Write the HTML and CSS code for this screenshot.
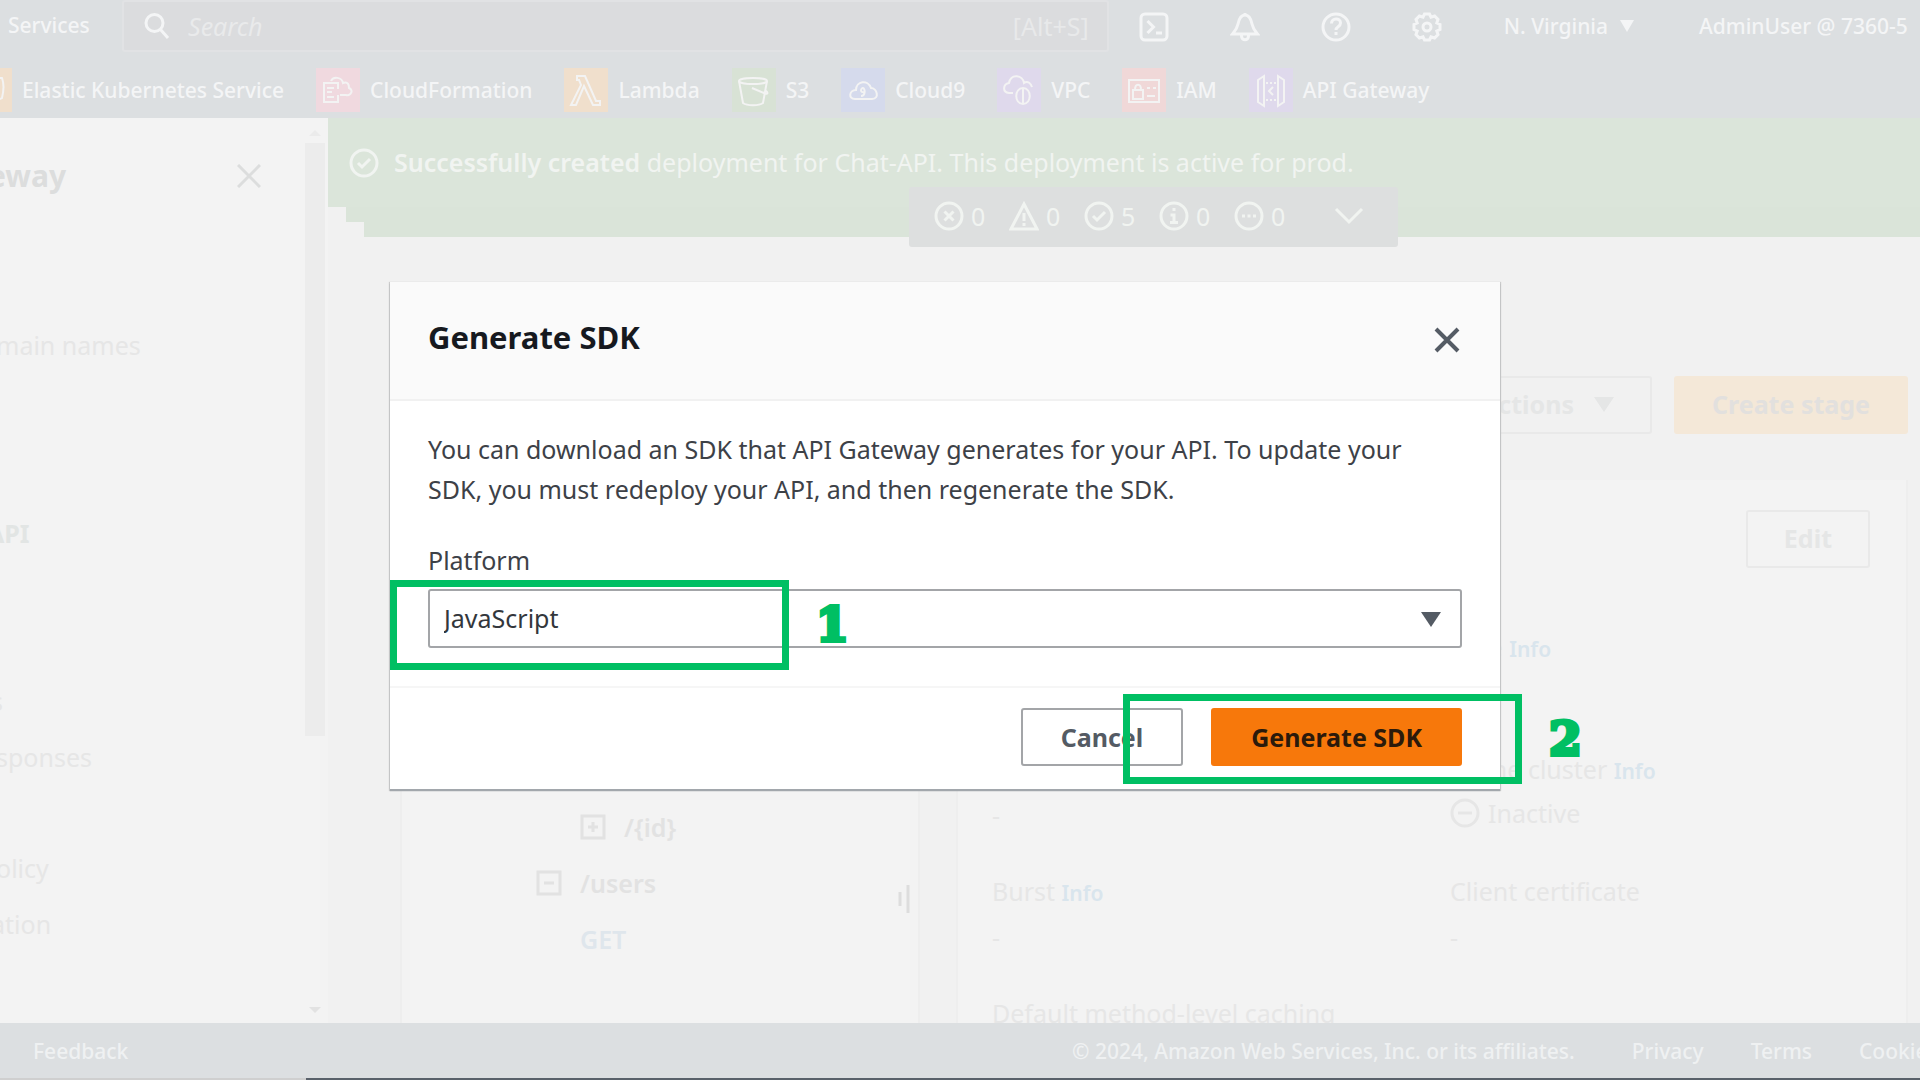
FILE: index.html
```html
<!DOCTYPE html>
<html lang="en">
<head>
<meta charset="utf-8">
<meta name="viewport" content="width=device-width, initial-scale=1">
<title>API Gateway - Stages</title>
<link rel="stylesheet" href="styles.css">
</head>
<body>
<div class="page">
  <header class="topbar">
    <div class="topbar-main">
      <a class="services" href="#">Services</a>
      <label class="search">
        <svg class="icon-search" viewBox="0 0 26 26" aria-hidden="true"><circle cx="10.500" cy="10" r="8.500"/><path d="M16.500 16.500 24 25"/></svg>
        <input type="search" placeholder="Search" aria-label="Search">
        <span class="shortcut">[Alt+S]</span>
      </label>
      <div class="tools">
        <button type="button" aria-label="CloudShell"><svg viewBox="0 0 30 30"><rect x="2" y="2" width="26" height="26" rx="4"/><path d="m8.500 9 6 6-6 6M17 21h6"/></svg></button>
        <button type="button" aria-label="Notifications"><svg viewBox="0 0 30 30"><path d="M15 3c-4 0-6 4-7 9C7 17 5 19 2.500 22h25c-2.500-3-4.500-5-5.500-10-1-5-3-9-7-9zM11.500 22v2c0 5 7 5 7 0v-2M15 3V1"/></svg></button>
        <button type="button" aria-label="Help"><svg viewBox="0 0 30 30"><circle cx="15" cy="15" r="13"/><path d="M10.500 11.500c0-6 9-6 9-.5 0 4-4.500 3.500-4.500 7M15 20v3"/></svg></button>
        <button type="button" aria-label="Settings"><svg viewBox="0 0 30 30"><path d="m12.500 2 5 0 1.500 3.200 3.600-1.200 3.400 3.400-1.200 3.600 3.200 1.500v5l-3.200 1.500 1.200 3.600-3.400 3.400-3.600-1.200-1.500 3.200h-5l-1.500-3.200-3.600 1.200L4 22.600 5.200 19 2 17.500v-5L5.200 11 4 7.400 7.400 4 11 5.200z"/><circle cx="15" cy="15" r="4"/></svg></button>
      </div>
      <button type="button" class="region">N. Virginia <svg class="caret-sm" viewBox="0 0 14 12"><path d="M0 0h14L7 12z"/></svg></button>
      <button type="button" class="account">AdminUser @ 7360-5</button>
    </div>
    <nav class="favorites" aria-label="Favorites">
      <a href="#"><svg class="svc svc-orange" viewBox="0 0 44 44"><path d="M22 10h12q3 8 0 20l-12 6"/></svg>Elastic Kubernetes Service</a>
      <a href="#"><svg class="svc svc-pink" viewBox="0 0 44 44"><path d="M22 27v7H8V15h14v6M11 20h7M11 24h5M11 29h7M15 13c2-5 11-4 12 2 5-2 6 2 6 5 5 2 2 8-3 7h-6"/></svg>CloudFormation</a>
      <a href="#"><svg class="svc svc-orange" viewBox="0 0 44 44"><path d="M13 8h8l11 25h4v4h-7l-9-19-8 19H7l10-20-2-5h-2z"/></svg>Lambda</a>
      <a href="#"><svg class="svc svc-green" viewBox="0 0 44 44"><ellipse cx="21" cy="13" rx="14" ry="3"/><path d="m7 13 4 22c4 3 16 3 20 0l4-22M20 20l12 5c5 2 4-1 1-3"/></svg>S3</a>
      <a href="#"><svg class="svc svc-blue" viewBox="0 0 44 44"><path d="M14 31c-7 0-6-9 1-9 0-9 12-11 15-2 6 0 9 11 1 11zM20 28c5 0 4-8 2-8s-4 5 2 4"/></svg>Cloud9</a>
      <a href="#"><svg class="svc svc-purple" viewBox="0 0 44 44"><path d="M16 25h-4c-7-1-6-9 0-10 2-10 14-8 15 0 4-3 7 1 8 4M26 20c9 0 9 16 0 16s-9-16 0-16zM26 20v16"/></svg>VPC</a>
      <a href="#"><svg class="svc svc-red" viewBox="0 0 44 44"><path d="M7 12h30v22H7zM11 22h10v9H11zM13 22c0-7 6-7 6 0M25 20h3M31 20h3M25 28h8"/></svg>IAM</a>
      <a href="#"><svg class="svc svc-purple" viewBox="0 0 44 44"><path d="m9 12 6-4v30l-6-4zM35 12l-6-4v30l6-4zM24 19l-4 4 4 4"/><path stroke-dasharray="2 2" d="M17 15h10M17 32h10"/></svg>API Gateway</a>
    </nav>
  </header>

  <div class="body">
    <aside class="sidebar">
      <div class="sidebar-scroll">
        <div class="sidebar-head">
          <h2>eway</h2>
          <button type="button" class="close-muted" aria-label="Close navigation"><svg viewBox="0 0 24 24"><path d="m1 1 22 22M23 1 1 23"/></svg></button>
        </div>
        <nav class="side-links" aria-label="Service">
          <a href="#">main names</a>
          <a class="side-api" href="#">API</a>
          <a class="side-cut" href="#">s</a>
          <a href="#">sponses</a>
          <a class="side-policy" href="#">olicy</a>
          <a class="side-cut" href="#">ation</a>
        </nav>
      </div>
      <div class="scrollbar" aria-hidden="true"><i class="up"></i><i class="thumb"></i><i class="down"></i></div>
    </aside>

    <main class="content">
      <div class="flash">
        <div class="flash-item">
          <svg class="status" viewBox="0 0 30 30"><circle cx="15" cy="15" r="13"/><path d="m9 15 4 4 8-8"/></svg>
          <p><strong>Successfully created</strong> deployment for Chat-API. This deployment is active for prod.</p>
        </div>
        <div class="flash-layer flash-second"></div>
        <div class="flash-layer flash-third"></div>
        <button type="button" class="flash-bar" aria-label="Notifications">
          <span><svg class="status" viewBox="0 0 30 30"><circle cx="15" cy="15" r="13"/><path d="m10.500 10.500 9 9M19.500 10.500l-9 9"/></svg>0</span>
          <span><svg class="status" viewBox="0 0 30 30"><path d="M15 3 28 28H2zM15 12v8M15 22v3"/></svg>0</span>
          <span><svg class="status" viewBox="0 0 30 30"><circle cx="15" cy="15" r="13"/><path d="m9 15 4 4 8-8"/></svg>5</span>
          <span><svg class="status" viewBox="0 0 30 30"><circle cx="15" cy="15" r="13"/><path d="M15 7v3M11.500 14H15v7M11 21.500h8"/></svg>0</span>
          <span><svg class="status" viewBox="0 0 30 30"><circle cx="15" cy="15" r="13"/><path d="M8 15h3M13.500 15h3M19 15h3"/></svg>0</span>
          <svg class="status chevron" viewBox="0 0 30 30"><path d="m2 8 13 13L28 8"/></svg>
        </button>
      </div>

      <div class="actions">
        <button type="button" class="btn-muted">Actions <svg class="caret-md" viewBox="0 0 20 15"><path d="M0 0h20L10 15z"/></svg></button>
        <button type="button" class="btn-muted btn-stage">Create stage</button>
      </div>

      <div class="panels">
        <section class="tree">
          <ul>
            <li class="level-3"><svg class="box" viewBox="0 0 26 26"><path d="M2 2h22v22H2zM8 13h10M13 8v10"/></svg>/{id}</li>
            <li class="level-2"><svg class="box" viewBox="0 0 26 26"><path d="M2 2h22v22H2zM8 13h10"/></svg>/users</li>
            <li class="level-3"><a href="#">GET</a></li>
          </ul>
          <svg class="handle" viewBox="0 0 12 30"><path d="M2 8v14M10 1v28"/></svg>
        </section>
        <section class="details">
          <div class="details-head"><button type="button" class="btn-muted">Edit</button></div>
          <dl>
            <div class="first-right"><dt>Rate <a href="#">Info</a></dt><dd>-</dd></div>
            <div><dt>Rate <a href="#">Info</a></dt><dd>-</dd></div>
            <div><dt>Cache cluster <a href="#">Info</a></dt><dd class="state"><svg class="status" viewBox="0 0 30 30"><circle cx="15" cy="15" r="13"/><path d="M8 15h14"/></svg>Inactive</dd></div>
            <div><dt>Burst <a href="#">Info</a></dt><dd>-</dd></div>
            <div><dt>Client certificate</dt><dd>-</dd></div>
            <div><dt>Default method-level caching</dt></div>
          </dl>
        </section>
      </div>
    </main>
  </div>

  <footer class="footer">
    <a href="#">Feedback</a>
    <p>© 2024, Amazon Web Services, Inc. or its affiliates.</p>
    <a href="#">Privacy</a>
    <a href="#">Terms</a>
    <a class="cookies" href="#">Cookie</a>
  </footer>
  <div class="edge" aria-hidden="true"></div>
</div>

<div class="overlay">
  <form class="modal" role="dialog" aria-labelledby="modal-title">
    <header class="modal-head">
      <h1 id="modal-title">Generate SDK</h1>
      <button type="button" class="modal-close" aria-label="Close"><svg viewBox="0 0 26 26"><path d="m2 2 22 22M24 2 2 24"/></svg></button>
    </header>
    <div class="modal-body">
      <p>You can download an SDK that API Gateway generates for your API. To update your SDK, you must redeploy your API, and then regenerate the SDK.</p>
      <label for="platform">Platform</label>
      <div class="select-wrap">
        <select id="platform"><option>JavaScript</option></select>
        <svg class="select-caret" viewBox="0 0 20 15"><path d="M0 0h20L10 15z"/></svg>
        <div class="mark mark-one"><b>1</b></div>
      </div>
    </div>
    <footer class="modal-foot">
      <button type="button" class="btn">Cancel</button>
      <button type="button" class="btn btn-primary">Generate SDK</button>
      <div class="mark mark-two"><b>2</b></div>
    </footer>
  </form>
</div>
</body>
</html>
```
FILE: styles.css
```css
* { box-sizing: border-box; }

body {
  margin: 0;
  font-family: "Noto Sans", "Open Sans", sans-serif;
  font-size: 25px;
  line-height: 40px;
  color: #e6e6e6;
  background: #f1f1f1;
}

h1, h2, p, ul, dl, dd { margin: 0; padding: 0; }
a { color: inherit; text-decoration: none; }
button { padding: 0; border: 0; background: none; font: inherit; color: inherit; }
svg { flex: none; fill: none; stroke: currentColor; }

.page {
  display: flex;
  flex-direction: column;
  height: 100vh;
  overflow: hidden;
}

/* Top navigation */
.topbar {
  background: #dcdfe1;
  color: #f4f5f6;
  font-size: 21px;
  line-height: 32px;
}

.topbar-main { display: flex; height: 56px; }
.services { width: 122px; padding: 9px 0 0 8px; font-weight: 500; }

.search {
  flex: 1;
  display: flex;
  align-items: center;
  gap: 18px;
  height: 52px;
  padding: 0 18px 0 20px;
  background: #dbdcde;
  border: 2px solid #e1e2e4;
  border-radius: 3px;
  font-size: 25px;
}
.search input {
  flex: 1;
  min-width: 0;
  padding: 0;
  border: 0;
  background: none;
  font: inherit;
  outline: 0;
}
.search input::placeholder { color: #e9eaeb; font-style: italic; opacity: 1; }
.icon-search { width: 26px; height: 26px; stroke-width: 3; }
.shortcut { color: #e8e9ea; }

.tools { display: flex; align-items: center; gap: 61px; height: 53px; padding: 0 62px 0 30px; }
.tools button { display: flex; }
.tools svg { width: 30px; height: 30px; stroke-width: 3; }
.region { display: flex; align-items: center; gap: 12px; height: 52px; }
.caret-sm { width: 14px; height: 12px; fill: currentColor; stroke: none; }
.account { width: 286px; height: 52px; padding-left: 65px; text-align: left; white-space: nowrap; overflow: hidden; }
.region, .account { font-weight: 500; }

.favorites { display: flex; gap: 32px; height: 62px; margin-left: -32px; padding-top: 12px; font-weight: 500; }
.favorites a { display: flex; align-items: center; gap: 10px; height: 44px; white-space: nowrap; }
.svc { width: 44px; height: 44px; color: #f3f3f3; stroke-width: 2; }
.svc-orange { background: #f0dfcc; }
.svc-pink { background: #f0d9df; }
.svc-green { background: #d8e2d5; }
.svc-blue { background: #d5daec; }
.svc-purple { background: #dfd9ec; }
.svc-red { background: #f0d8d8; }

/* Side navigation */
.body { flex: 1; display: flex; min-height: 0; }
.sidebar { display: flex; width: 328px; background: #f3f3f3; overflow: hidden; }
.sidebar-scroll { flex: 1; }
.sidebar-head { display: flex; justify-content: space-between; align-items: center; height: 116px; padding-right: 44px; color: #dcdddd; }
.sidebar-head h2 { margin-left: -12px; font-size: 30px; }
.close-muted { display: flex; }
.close-muted svg { width: 24px; height: 24px; stroke-width: 3; }
.side-links { display: flex; flex-direction: column; gap: 16px; padding-top: 91px; }
.side-links a { margin-left: -4px; }
.side-links .side-api { margin: 132px 0 112px -13px; font-weight: 700; color: #e2e5e4; }
.side-links .side-cut { margin-left: -9px; }
.side-links .side-policy { margin-top: 55px; }
.scrollbar { display: flex; flex-direction: column; align-items: center; width: 23px; padding: 12px 3px 10px 0; }
.thumb { width: 20px; height: 593px; margin-top: 7px; background: #ececec; }
.up, .down { width: 12px; height: 6px; background: #e2e2e2; }
.up { background: #ebebeb; clip-path: polygon(0 100%, 50% 0, 100% 100%); }
.down { margin-top: auto; clip-path: polygon(0 0, 100% 0, 50% 100%); }

/* Notifications */
.content { flex: 1; min-width: 0; }
.flash { position: relative; color: #f1f4f1; }
.flash-item { display: flex; gap: 15px; align-items: center; height: 89px; padding-left: 21px; background: #dbe5da; }
.flash-item p { padding-bottom: 2px; white-space: nowrap; }
.flash-item strong { font-weight: 600; }
.status { width: 30px; height: 30px; stroke-width: 3; }
.flash-layer { height: 15px; background: #dae4d9; }
.flash-second { margin-left: 18px; }
.flash-third { margin-left: 36px; }
.flash-bar {
  position: absolute;
  left: 581px;
  bottom: -10px;
  display: flex;
  align-items: center;
  width: 489px;
  height: 60px;
  padding: 0 0 3px 25px;
  background: #dddfdf;
  border-radius: 3px;
}
.flash-bar span { display: flex; align-items: center; gap: 7px; width: 75px; }
.chevron { margin-left: 25px; }

/* Page actions */
.actions { display: flex; justify-content: flex-end; gap: 22px; padding: 139px 12px 46px 0; }
.btn-muted {
  display: flex;
  align-items: center;
  justify-content: center;
  gap: 20px;
  height: 58px;
  padding: 0 36px 2px;
  border: 2px solid #e9e9e9;
  border-radius: 3px;
  font-weight: 700;
  color: #e5e6e6;
}
.btn-stage { border-color: #f4e8d8; background: #f4e8d8; color: #e2e0de; }
.caret-md { width: 20px; height: 15px; fill: currentColor; stroke: none; }

/* Stage tree and details */
.panels { display: flex; gap: 36px; padding: 0 12px 0 72px; }
.tree { display: flex; align-items: flex-start; width: 520px; padding: 327px 8px 400px 0; background: #f3f3f3; border: solid #eeeeee; border-width: 0 2px; }
.tree ul { flex: 1; list-style: none; font-weight: 600; color: #e2e2e2; }
.tree li { display: flex; align-items: center; gap: 18px; margin-bottom: 16px; }
.level-2 { padding-left: 134px; }
.level-3 { padding-left: 178px; }
.tree a { color: #dfe6ec; }
.box { width: 26px; height: 26px; stroke-width: 3; }
.handle { width: 12px; height: 30px; margin-top: 77px; stroke-width: 3; color: #dddddd; }

.details { flex: 1; background: #f3f3f3; border: solid #eeeeee; border-width: 0 2px; }
.details-head { display: flex; justify-content: flex-end; padding: 30px 36px 59px 0; }
.details dl { display: grid; grid-template-columns: 458px 1fr; row-gap: 36px; padding-left: 34px; }
.details dt { height: 42px; }
.details dd { height: 44px; line-height: 48px; }
.details a { font-size: 21px; font-weight: 600; color: #d9e5ed; }
.first-right { grid-column: 2; }
.state { display: flex; align-items: center; gap: 8px; }

/* Page footer */
.footer {
  display: flex;
  align-items: center;
  gap: 47px;
  height: 55px;
  padding-left: 33px;
  background: #dcdfe1;
  color: #eff1f2;
  font-size: 21px;
  font-weight: 500;
  white-space: nowrap;
}
.footer p { margin-left: auto; padding-right: 10px; }
.cookies { width: 61px; overflow: hidden; }
.edge { height: 2px; background: #59616a; border-left: 306px solid #cfcfcf; }

/* Modal */
.overlay { position: absolute; inset: 0; padding: 282px 420px 0 390px; overflow: hidden; }
.modal { background: #ffffff; color: #3d4147; box-shadow: 0 2px 1px #a2a7ac, 0 1px 1px 1px #cccccc; }
.modal-head {
  display: flex;
  align-items: center;
  justify-content: space-between;
  height: 119px;
  padding: 0 40px 8px 38px;
  background: #fafafa;
  border-bottom: 2px solid #f1f1f1;
}
.modal-head h1 { font-size: 31px; color: #16191f; }
.modal-close { display: flex; color: #545b64; }
.modal-close svg { width: 26px; height: 26px; margin-top: 6px; stroke-width: 4; }
.modal-body { padding: 28px 38px 38px; }
.modal-body p { margin-bottom: 31px; }
.modal-body label { display: block; margin-bottom: 9px; }
.select-wrap { position: relative; }
.select-wrap select {
  display: block;
  width: 100%;
  height: 59px;
  padding: 0 14px 2px;
  border: 2px solid #a3a5a8;
  border-radius: 3px;
  appearance: none;
  background: #ffffff;
  font: inherit;
  color: #33373c;
}
.select-caret { position: absolute; right: 21px; top: 23px; width: 20px; height: 15px; fill: #545b64; stroke: none; pointer-events: none; }
.modal-foot {
  position: relative;
  display: flex;
  justify-content: flex-end;
  gap: 28px;
  padding: 20px 38px 23px;
  border-top: 2px solid #f6f6f6;
}
.btn { height: 58px; padding: 0 38px; border: 2px solid #a3a5a8; border-radius: 3px; background: #ffffff; font-weight: 700; color: #545b64; }
.btn-primary { border-color: #f7780b; background: #f7780b; color: #2b1a0b; }

/* Numbered step markers */
.mark { position: absolute; width: 399px; height: 90px; border: 7px solid #00bf63; pointer-events: none; }
.mark b {
  position: absolute;
  left: 100%;
  top: 8px;
  margin-left: 34px;
  font-family: "DejaVu Serif", serif;
  font-size: 47px;
  line-height: 60px;
  color: #00bf63;
  -webkit-text-stroke: 4px #00bf63;
}
.mark-one { left: -38px; top: -9px; }
.mark-two { right: -22px; top: 6px; }
```
